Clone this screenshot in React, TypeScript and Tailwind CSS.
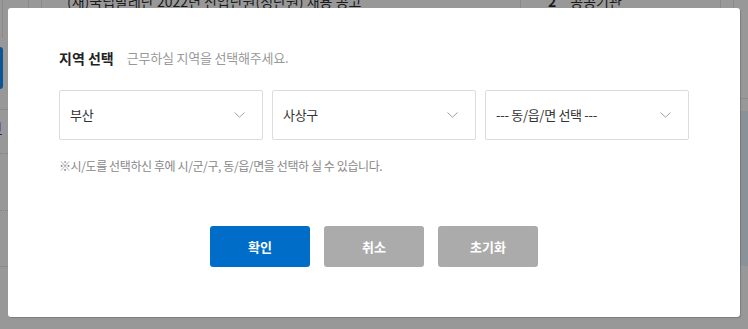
import React from "react";

const FONT = '"Noto Sans CJK KR", "Noto Sans", sans-serif';

function Chevron() {
  return (
    <svg width="11" height="6" viewBox="0 0 11 6" fill="none">
      <path d="M0.5 0.5 L5.5 5.2 L10.5 0.5" stroke="#a0a0a0" strokeWidth="1" />
    </svg>
  );
}

function SelectBox({ label }: { label: string }) {
  return (
    <div className="w-[204px] h-[50px] border border-[#dcdcdc] rounded-[2px] flex items-center justify-between pl-[10px] pr-[17px] bg-white">
      <span className="text-[13px] text-[#333333] tracking-[-0.3px]">{label}</span>
      <Chevron />
    </div>
  );
}

export default function App() {
  return (
    <div
      className="relative w-[748px] h-[329px] overflow-hidden bg-[#989898]"
      style={{ fontFamily: FONT }}
    >
      {/* dimmed page behind the modal */}
      <div className="flex flex-col">
        <div className="flex h-[38px]">
          <div className="w-[3px] border-r border-[#8a8a8a]" />
          <div className="w-[26px] h-[8px] border-r border-[#8a8a8a]" />
          <div className="w-[13px] h-[8px] border-r border-[#8a8a8a]" />
          <div className="w-[479px] h-[8px] border-r border-[#8a8a8a] overflow-hidden pl-[25px]">
            <div className="-mt-[9px] text-[14px] leading-[20px] text-[#1a1a1a] whitespace-nowrap">
              (재)국립발레단 2022년 신입단원(정단원) 채용 공고
            </div>
          </div>
          <div className="w-[200px] h-[8px] border-r border-[#8a8a8a] overflow-hidden flex pl-[27px] gap-[14px]">
            <span className="-mt-[9px] text-[14px] leading-[20px] font-bold text-[#1a1a1a]">2</span>
            <span className="-mt-[9px] text-[14px] leading-[20px] text-[#1a1a1a]">공공기관</span>
          </div>
          <div className="w-[13px] h-[8px] border-r border-[#8a8a8a]" />
        </div>
        <div className="flex justify-between">
          <div className="w-[8px] flex flex-col">
            <div className="mt-[9px] w-[3px] h-[42px] rounded-r-[3px] bg-[#0b5595]" />
            <div className="h-[21px] border-b border-[#8a8a8a]" />
            <div className="h-[26px] w-[8px] overflow-hidden flex items-end">
              <span className="-ml-[10px] text-[13px] leading-[16px] text-[#4e1456] underline">번</span>
            </div>
            <div className="h-[18px] border-b border-dotted border-[#858585]" />
            <div className="h-[57px] border-b border-dotted border-[#858585]" />
            <div className="h-[56px] border-b border-[#8a8a8a]" />
          </div>
          <div className="w-[8px] flex flex-col">
            <div className="h-[61px] border-b border-[#8a8a8a]" />
            <div className="mt-[12px] h-[155px] bg-[#8a9197]" />
          </div>
        </div>
      </div>

      {/* modal overlay */}
      <div className="absolute inset-0 pl-[8px] pt-[8px]">
        <div className="w-[732px] h-[309px] bg-white rounded-[3px] shadow-[1px_1px_1px_rgba(0,0,0,0.18)] px-[51px] pt-[39px] flex flex-col">
          <div className="flex items-center h-[22px]">
            <span className="text-[14px] font-bold text-[#222222]">지역 선택</span>
            <span className="ml-[13px] text-[13px] text-[#999999] tracking-[-0.2px]">근무하실 지역을 선택해주세요.</span>
          </div>
          <div className="mt-[21px] flex gap-[9px]">
            <SelectBox label="부산" />
            <SelectBox label="사상구" />
            <SelectBox label="--- 동/읍/면 선택 ---" />
          </div>
          <div className="mt-[18px] text-[12px] leading-[16px] text-[#888888] tracking-[-0.4px]">
            ※시/도를 선택하신 후에 시/군/구, 동/읍/면을 선택하 실 수 있습니다.
          </div>
          <div className="mt-[52px] flex justify-center gap-[14px]">
            <button className="w-[100px] h-[41px] rounded-[3px] bg-[#006ec8] text-white text-[13px] font-bold">확인</button>
            <button className="w-[100px] h-[41px] rounded-[3px] bg-[#ababab] text-white text-[13px] font-bold">취소</button>
            <button className="w-[100px] h-[41px] rounded-[3px] bg-[#ababab] text-white text-[13px] font-bold">초기화</button>
          </div>
        </div>
      </div>
    </div>
  );
}
